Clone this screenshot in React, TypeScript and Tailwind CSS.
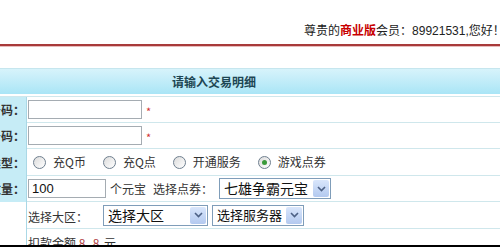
const font = { fontFamily: '"Noto Sans CJK SC", "Liberation Sans", sans-serif' };

function Radio({ checked, label }: { checked?: boolean; label: string }) {
  return (
    <label className="flex items-center gap-[7px]">
      <span className="flex h-[13px] w-[13px] items-center justify-center rounded-full border border-[#6f7f8f] bg-gradient-to-br from-[#dcdcdc] to-white">
        {checked && <span className="h-[5px] w-[5px] rounded-full bg-[#3a9a3a]" />}
      </span>
      <span className="text-[12px] text-[#333]">{label}</span>
    </label>
  );
}

function Select({ text, width, big }: { text: string; width: string; big?: boolean }) {
  return (
    <div className={`flex h-[21px] items-center justify-between border border-[#7f9db9] bg-white pl-[4px] pr-[1px] ${width}`}>
      <span className={`whitespace-nowrap ${big ? "text-[14px]" : "text-[13px]"} text-[#111]`}>{text}</span>
      <span className="flex h-[17px] w-[16px] items-center justify-center rounded-[2px] bg-gradient-to-b from-[#d9e6fb] to-[#b3c9ef]">
        <svg width="9" height="6" viewBox="0 0 9 6">
          <path d="M1 1 L4.5 4.5 L8 1" stroke="#4d6185" strokeWidth="1.6" fill="none" />
        </svg>
      </span>
    </div>
  );
}

function Label({ text, blue = true }: { text: string; blue?: boolean }) {
  return (
    <div
      className={`flex items-center justify-end overflow-hidden whitespace-nowrap border-r border-[#aad8e6] pr-[1px] text-[12px] font-bold text-[#333] ${
        blue ? "bg-[#c6ecf6]" : "bg-white"
      }`}
    >
      {text}
    </div>
  );
}

export default function App() {
  return (
    <div className="flex h-[247px] w-[500px] flex-col overflow-hidden bg-white" style={font}>
      <div className="h-[44px] shrink-0 overflow-hidden whitespace-nowrap pl-[304px] pt-[21px] text-[12px] text-[#222]">
        尊贵的<span className="font-bold text-[#c80000]">商业版</span>会员：
        <span style={{ fontFamily: '"Liberation Sans", sans-serif' }}>89921531,</span>您好！
      </div>
      <div className="h-[2px] shrink-0 bg-[#a83a3a]" />
      <div className="h-[1px] shrink-0 bg-[#e8bcbc]" />
      <div className="h-[21px] shrink-0" />
      <div className="flex h-[26px] shrink-0 items-center border-t border-[#c6e6ee] bg-gradient-to-b from-[#d7f3fb] to-[#a9e5f6] pl-[172px] text-[12px] font-bold text-[#1d4653]">
        请输入交易明细
      </div>
      <div className="h-[2px] shrink-0" />
      <div className="grid min-h-0 flex-1 grid-cols-[27px_1fr] grid-rows-[26px_26px_27px_26px_27px_1fr] border-t border-[#cfe7ec]">
        <Label text="QQ号码：" />
        <div className="flex items-center gap-[4px] border-b border-[#cfe7ec] pl-[1px]">
          <div className="h-[19px] w-[114px] border border-[#a5acb2] bg-white" />
          <span className="pt-[3px] text-[11px] text-[#d03030]">*</span>
        </div>
        <Label text="确认号码：" />
        <div className="flex items-center gap-[4px] border-b border-[#cfe7ec] pl-[1px]">
          <div className="h-[19px] w-[114px] border border-[#a5acb2] bg-white" />
          <span className="pt-[3px] text-[11px] text-[#d03030]">*</span>
        </div>
        <Label text="充值类型：" />
        <div className="flex items-center gap-[17px] border-b border-[#cfe7ec] pl-[6px]">
          <Radio label="充Q币" />
          <Radio label="充Q点" />
          <Radio label="开通服务" />
          <Radio label="游戏点券" checked />
        </div>
        <Label text="充值数量：" />
        <div className="flex items-center border-b border-[#cfe7ec] pl-[1px] text-[12px] text-[#333]">
          <div className="flex h-[19px] w-[78px] items-center border border-[#a5acb2] bg-white pl-[3px] text-[13px] text-[#111]">
            <span style={{ fontFamily: '"Liberation Sans", sans-serif' }}>100</span>
          </div>
          <span className="ml-[4px]">个元宝</span>
          <span className="ml-[7px]">选择点券：</span>
          <div className="ml-[6px]">
            <Select text="七雄争霸元宝" width="w-[112px]" big />
          </div>
        </div>
        <Label text="" blue={false} />
        <div className="flex items-center border-b border-[#cfe7ec] pl-[1px] text-[12px] text-[#333]">
          <span className="pt-[3px]">选择大区：</span>
          <div className="ml-[15px]">
            <Select text="选择大区" width="w-[105px]" big />
          </div>
          <div className="ml-[4px]">
            <Select text="选择服务器" width="w-[92px]" />
          </div>
        </div>
        <Label text="" blue={false} />
        <div className="flex items-end overflow-hidden pl-[1px] text-[12px] text-[#333]">
          <span className="-mb-[7px]">
            扣款金额 <span className="tracking-[2px] text-[#b04040]">8.8</span> 元
          </span>
        </div>
      </div>
      <div className="h-[2px] shrink-0 bg-black" />
    </div>
  );
}
